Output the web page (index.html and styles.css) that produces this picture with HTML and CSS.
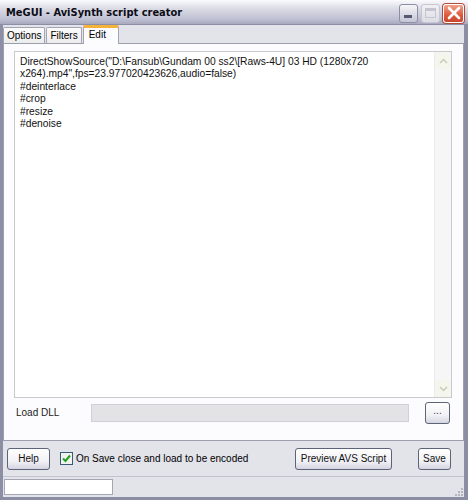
FILE: index.html
```html
<!DOCTYPE html>
<html>
<head>
  <title>MeGUI - AviSynth script creator</title>
  <meta name="viewport" content="width=device-width, initial-scale=1">
  <link rel="stylesheet" href="styles.css">
</head>
<body>
  <div class="window">
    <div class="titlebar">
      <span class="title">MeGUI - AviSynth script creator</span>
      <div class="caption-buttons">
        <span class="cap-btn cap-min"><span class="min-bar"></span></span>
        <span class="cap-btn cap-max"><span class="max-box"></span></span>
        <span class="cap-btn cap-close">
          <svg width="14" height="14" viewBox="0 0 14 14"><path d="M2 2 L12 12 M12 2 L2 12" stroke="#fff" stroke-width="2.6" stroke-linecap="round"/></svg>
        </span>
      </div>
    </div>

    <div class="client">
      <div class="tabs">
        <span class="tab">Options</span>
        <span class="tab">Filters</span>
        <span class="tab tab-active">Edit</span>
      </div>
      <div class="panel">
        <div class="editor">
          <div class="editor-text">DirectShowSource("D:\Fansub\Gundam 00 ss2\[Raws-4U] 03 HD (1280x720 x264).mp4",fps=23.977020423626,audio=false)
#deinterlace
#crop
#resize
#denoise</div>
          <div class="scrollbar">
            <span class="sb-btn">
              <svg width="9" height="6" viewBox="0 0 9 6"><path d="M1 5 L4.5 1.5 L8 5" fill="none" stroke="#c8cbb8" stroke-width="1.5"/></svg>
            </span>
            <span class="sb-track"></span>
            <span class="sb-btn">
              <svg width="9" height="6" viewBox="0 0 9 6"><path d="M1 1 L4.5 4.5 L8 1" fill="none" stroke="#c8cbb8" stroke-width="1.5"/></svg>
            </span>
          </div>
        </div>
        <div class="dll-row">
          <span class="dll-label">Load DLL</span>
          <span class="dll-input"></span>
          <span class="btn btn-dots">...</span>
        </div>
      </div>

      <div class="actions">
        <span class="btn btn-help">Help</span>
        <label class="check">
          <span class="check-box">
            <svg width="11" height="11" viewBox="0 0 11 11"><path d="M2 5.5 L4.5 8 L9 2.5" fill="none" stroke="#21a121" stroke-width="2"/></svg>
          </span>
          On Save close and load to be encoded
        </label>
        <span class="btn btn-preview">Preview AVS Script</span>
        <span class="btn btn-save">Save</span>
      </div>
    </div>

    <div class="statusbar">
      <span class="status-field"></span>
      <span class="grip">
        <svg width="10" height="10" viewBox="0 0 10 10" fill="#b5b5c0">
          <rect x="8" y="2" width="2" height="2"/><rect x="5" y="5" width="2" height="2"/><rect x="8" y="5" width="2" height="2"/>
          <rect x="2" y="8" width="2" height="2"/><rect x="5" y="8" width="2" height="2"/><rect x="8" y="8" width="2" height="2"/>
        </svg>
      </span>
    </div>
  </div>
</body>
</html>
```

FILE: styles.css
```css
* {
  box-sizing: border-box;
  margin: 0;
  padding: 0;
}

body {
  font-family: "Liberation Sans", Arial, sans-serif;
  font-size: 10px;
  color: #000;
  background-color: #fff;
}

.window {
  width: 468px;
  height: 500px;
  display: flex;
  flex-direction: column;
  background-color: #e3e3ea;
  border-left: 3px solid #8c8ea6;
  border-right: 4px solid #8c8ea6;
  border-bottom: 3px solid #8c8ea6;
}

/* title bar */
.titlebar {
  height: 25px;
  flex-shrink: 0;
  margin: 0 -4px 0 -3px;
  padding: 0 4px 0 6px;
  display: flex;
  align-items: center;
  justify-content: space-between;
  background: linear-gradient(#fbfbfd 0%, #dcdce6 35%, #bfc0d2 80%, #a8a9bf 100%);
  border-bottom: 1px solid #8c8ea6;
}

.title {
  font-family: "DejaVu Sans Condensed", "DejaVu Sans", sans-serif;
  font-weight: bold;
  font-size: 11px;
  color: #0c0c16;
  padding-top: 1px;
}

.caption-buttons {
  display: flex;
  gap: 3px;
  padding-top: 2px;
}

.cap-btn {
  width: 19px;
  height: 19px;
  border-radius: 3px;
  display: flex;
  align-items: center;
  justify-content: center;
  position: relative;
}

.cap-min {
  background: linear-gradient(#f6f6f9, #c4c5d6);
  border: 1px solid #8c8ea6;
}

.min-bar {
  position: absolute;
  left: 4px;
  bottom: 4px;
  width: 8px;
  height: 3px;
  background-color: #555a70;
}

.cap-max {
  background: linear-gradient(#f1f1f4, #dcdce4);
  border: 1px solid #c6c7d3;
}

.max-box {
  width: 11px;
  height: 10px;
  border: 1px solid #c4c5d0;
  border-top-width: 3px;
}

.cap-close {
  width: 21px;
  background: linear-gradient(#f0a08a, #dd5a3c 60%, #c8452e);
  border: 1px solid #fff;
  box-shadow: 0 0 0 1px #b04a3a;
}

/* client area */
.client {
  display: flex;
  flex-direction: column;
}

.tabs {
  display: flex;
  align-items: flex-end;
  height: 18px;
}

.tab {
  height: 16px;
  padding: 0 3px;
  line-height: 15px;
  background: linear-gradient(#fbfbfb, #ececec);
  border: 1px solid #a2a4b4;
  border-bottom: none;
  border-radius: 2px 2px 0 0;
  margin-right: 1px;
}

.tab-active {
  height: 19px;
  width: 36px;
  padding: 0 0 0 5px;
  background: #fcfcfe;
  border-top: 3px solid #f5b23a;
  line-height: 14px;
  margin-bottom: -1px;
  position: relative;
  z-index: 1;
}

.panel {
  height: 398px;
  background-color: #fcfcfe;
  border: 1px solid #9d9fb0;
  padding: 7px 11px 0 10px;
  display: flex;
  flex-direction: column;
}

.editor {
  height: 347px;
  flex-shrink: 0;
  display: flex;
  background-color: #fff;
  border: 1px solid #c9c9d0;
}

.editor-text {
  flex: 1;
  padding: 4px 4px 0 5px;
  font-size: 10.25px;
  line-height: 12.4px;
  white-space: pre-wrap;
  color: #111;
}

.scrollbar {
  width: 17px;
  display: flex;
  flex-direction: column;
  background-color: #f6f6f6;
  border-left: 1px solid #ececec;
}

.sb-btn {
  height: 17px;
  display: flex;
  align-items: center;
  justify-content: center;
  background-color: #f4f5ec;
}

.sb-track {
  flex: 1;
}

.dll-row {
  display: flex;
  align-items: center;
  height: 29px;
}

.dll-label {
  width: 77px;
  padding-left: 2px;
  color: #222;
}

.dll-input {
  width: 318px;
  height: 18px;
  background-color: #e3e3e6;
  border: 1px solid #d0d0d6;
}

.btn {
  display: flex;
  align-items: center;
  justify-content: center;
  height: 22px;
  white-space: nowrap;
  border: 1px solid #5c6478;
  border-radius: 3px;
  background: linear-gradient(#ffffff, #f2f2f6 60%, #d4d5e2);
  color: #111;
}

.btn-dots {
  width: 25px;
  margin-left: 16px;
  padding-bottom: 4px;
  color: #444;
}

/* bottom buttons */
.actions {
  height: 36px;
  display: flex;
  align-items: center;
  padding: 0 13px 0 4px;
  border-bottom: 1px solid #c2c3cf;
}

.btn-help {
  width: 43px;
}

.check {
  display: flex;
  align-items: center;
  gap: 3px;
  margin-left: 10px;
}

.check-box {
  width: 13px;
  height: 13px;
  border: 1px solid #3a5a78;
  background: #f2f2ee;
  display: flex;
  align-items: center;
  justify-content: center;
}

.btn-preview {
  width: 97px;
  margin-left: auto;
}

.btn-save {
  width: 33px;
  margin-left: 26px;
}

/* status bar */
.statusbar {
  height: 20px;
  display: flex;
  align-items: center;
  justify-content: space-between;
  padding: 0 1px;
}

.status-field {
  width: 109px;
  height: 16px;
  background-color: #fff;
  border: 1px solid #a5a6b4;
}

.grip {
  display: flex;
  align-self: flex-end;
  padding-bottom: 1px;
}
```
